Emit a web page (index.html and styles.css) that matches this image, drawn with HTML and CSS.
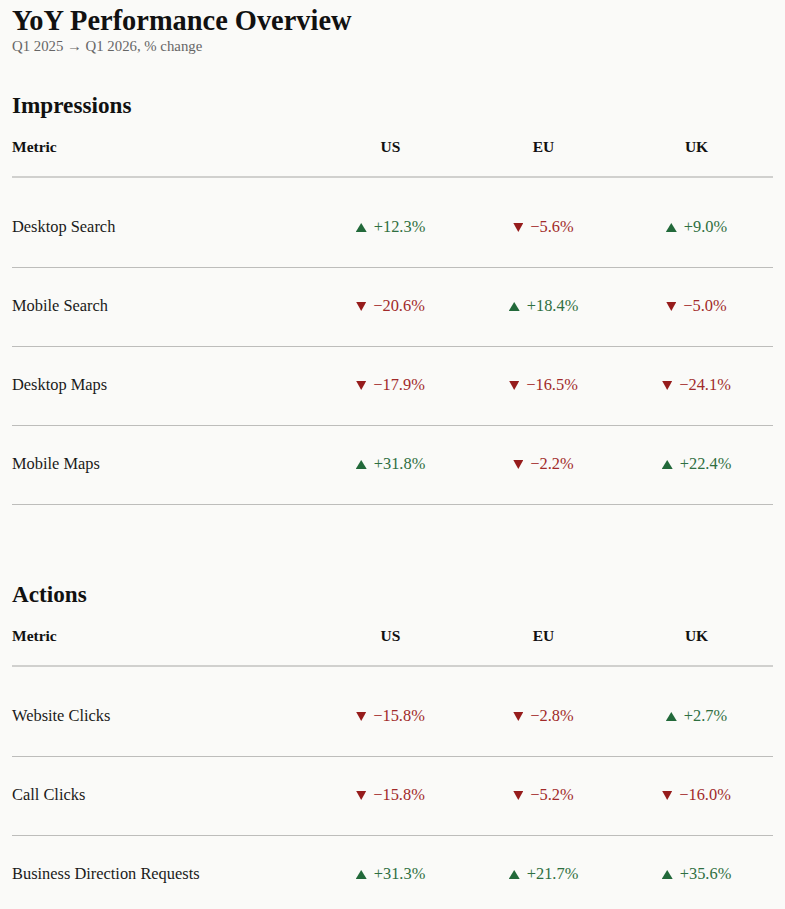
FILE: index.html
```html
<!DOCTYPE html>
<html lang="en">
<head>
<meta charset="utf-8">
<title>YoY Performance Overview</title>
<link rel="stylesheet" href="styles.css">
</head>
<body>
<header class="page-head">
  <h1 class="title">YoY Performance Overview</h1>
  <p class="subtitle">Q1 2025 → Q1 2026, % change</p>
</header>

<section class="section">
  <h2 class="section-title">Impressions</h2>
  <table class="grid">
    <colgroup><col class="c-metric"><col><col><col></colgroup>
    <thead>
      <tr><th class="metric">Metric</th><th>US</th><th>EU</th><th>UK</th></tr>
    </thead>
    <tbody>
      <tr><td class="metric">Desktop Search</td><td><span class="chg up">+12.3%</span></td><td><span class="chg down">−5.6%</span></td><td><span class="chg up">+9.0%</span></td></tr>
      <tr><td class="metric">Mobile Search</td><td><span class="chg down">−20.6%</span></td><td><span class="chg up">+18.4%</span></td><td><span class="chg down">−5.0%</span></td></tr>
      <tr><td class="metric">Desktop Maps</td><td><span class="chg down">−17.9%</span></td><td><span class="chg down">−16.5%</span></td><td><span class="chg down">−24.1%</span></td></tr>
      <tr><td class="metric">Mobile Maps</td><td><span class="chg up">+31.8%</span></td><td><span class="chg down">−2.2%</span></td><td><span class="chg up">+22.4%</span></td></tr>
    </tbody>
  </table>
</section>

<section class="section">
  <h2 class="section-title">Actions</h2>
  <table class="grid">
    <colgroup><col class="c-metric"><col><col><col></colgroup>
    <thead>
      <tr><th class="metric">Metric</th><th>US</th><th>EU</th><th>UK</th></tr>
    </thead>
    <tbody>
      <tr><td class="metric">Website Clicks</td><td><span class="chg down">−15.8%</span></td><td><span class="chg down">−2.8%</span></td><td><span class="chg up">+2.7%</span></td></tr>
      <tr><td class="metric">Call Clicks</td><td><span class="chg down">−15.8%</span></td><td><span class="chg down">−5.2%</span></td><td><span class="chg down">−16.0%</span></td></tr>
      <tr><td class="metric">Business Direction Requests</td><td><span class="chg up">+31.3%</span></td><td><span class="chg up">+21.7%</span></td><td><span class="chg up">+35.6%</span></td></tr>
    </tbody>
  </table>
</section>
</body>
</html>
```

FILE: styles.css
```css
html {
  background: #fafaf8;
}

body {
  margin: 0;
  padding: 5px 12px 40px;
  font-family: "Liberation Serif", "Times New Roman", serif;
  color: #1a1a1a;
  background: #fafaf8;
}

.title {
  margin: 0;
  font-size: 28.4px;
  line-height: 32px;
  font-weight: bold;
  color: #111;
}

.subtitle {
  margin: 0;
  font-size: 14.8px;
  line-height: 18px;
  color: #666;
}

.section {
  margin-top: 36px;
}

.section + .section {
  margin-top: 75px;
}

.section-title {
  margin: 0;
  font-size: 23.2px;
  line-height: 28px;
  font-weight: bold;
  color: #111;
}

.grid {
  width: 100%;
  border-collapse: collapse;
  table-layout: fixed;
}

.c-metric {
  width: 302px;
}

.grid th {
  font-size: 15.5px;
  line-height: 18px;
  font-weight: bold;
  color: #111;
  text-align: center;
  padding: 19px 0 20px;
  border-bottom: 2px solid #d0d0ce;
}

.grid td {
  font-size: 16.4px;
  line-height: 18px;
  text-align: center;
  padding: 29px 0 31px;
  border-bottom: 1px solid #bdbdbb;
}

.grid tbody tr:first-child td {
  padding-top: 40px;
}

.grid .metric {
  text-align: left;
}

.chg {
  white-space: nowrap;
}

.chg::before {
  content: "";
  display: inline-block;
  width: 11px;
  height: 9px;
  margin-right: 7px;
  vertical-align: baseline;
}

.up {
  color: #2f6f41;
}

.up::before {
  background: #22693a;
  clip-path: polygon(50% 0, 100% 100%, 0 100%);
}

.down {
  color: #a12a2a;
}

.down::before {
  width: 10px;
  background: #961c1c;
  clip-path: polygon(0 0, 100% 0, 50% 100%);
}
```
